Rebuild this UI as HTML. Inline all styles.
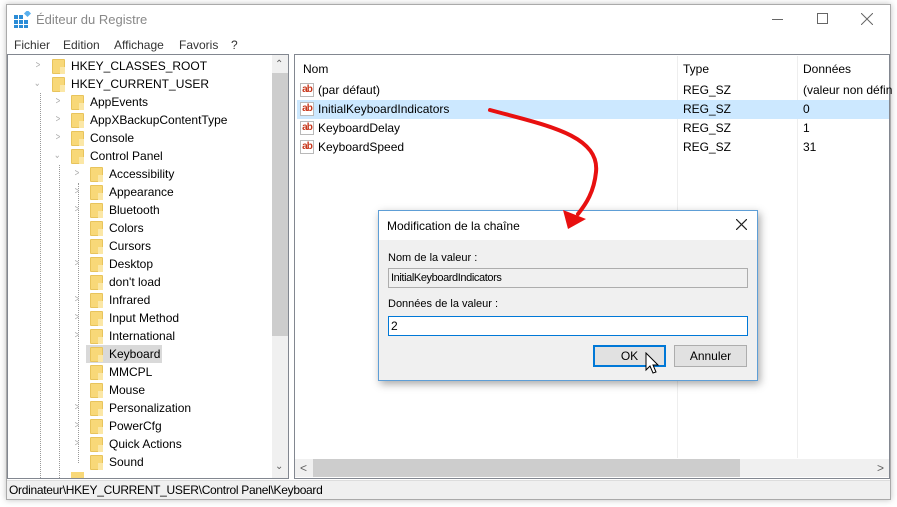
<!DOCTYPE html>
<html><head><meta charset="utf-8"><style>
*{margin:0;padding:0;box-sizing:border-box}
body{width:897px;height:507px;background:#fff;font-family:"Liberation Sans",sans-serif;font-size:12px;color:#000;position:relative;overflow:hidden}
.a{position:absolute}
.win{left:6px;top:4px;width:885px;height:496px;background:#fff;border:1px solid #aaa;box-shadow:0 0 6px rgba(0,0,0,.25)}
.t{position:absolute;white-space:nowrap;line-height:18px;height:18px}
.f{position:absolute;width:13px;height:15px;margin-top:2px;background:#f8d878;border:1px solid #e8c45c;border-radius:1px}
.f:after{content:"";position:absolute;right:-1px;bottom:-1px;width:5px;height:7px;background:#fbe7a6}
.ch{position:absolute;font-size:10px;color:#aaa;line-height:18px;transform:scaleX(.8)}
.ab{position:absolute;width:14px;height:14px;border:1px solid #b9b9b9;background:#fff;color:#c8381c;font-size:10px;font-weight:bold;line-height:12px;text-align:center;letter-spacing:-1px}
.btn{position:absolute;height:22px;background:#e1e1e1;border:1px solid #adadad;text-align:center;line-height:20px}
.tree{position:absolute;left:0;top:1px;width:290px;height:478px}
</style></head><body>
<div class="a win"></div>
<svg class="a" style="left:14px;top:11px" width="17" height="17" viewBox="0 0 17 17"><g fill="#2b8cd6"><rect x="0" y="4" width="4" height="4"/><rect x="5" y="4" width="4" height="4"/><rect x="0" y="9" width="4" height="4"/><rect x="5" y="9" width="4" height="4"/><rect x="10" y="9" width="4" height="4"/><rect x="0" y="14" width="4" height="3"/><rect x="5" y="14" width="4" height="3"/><rect x="10" y="14" width="4" height="3"/></g><rect x="11" y="0" width="5" height="5" fill="#5ab0ee" transform="rotate(45 13.5 2.5)"/></svg>
<div class="t" style="left:36px;top:11px;font-size:13px;color:#888">Éditeur du Registre</div>
<div class="a" style="left:772px;top:19px;width:11px;height:1px;background:#666"></div>
<div class="a" style="left:817px;top:13px;width:11px;height:11px;border:1px solid #666"></div>
<svg class="a" style="left:861px;top:13px" width="12" height="12"><path d="M0 0L12 12M12 0L0 12" stroke="#666" stroke-width="1"/></svg>
<div class="t" style="left:14px;top:36px;color:#333">Fichier</div>
<div class="t" style="left:63px;top:36px;color:#333">Edition</div>
<div class="t" style="left:114px;top:36px;color:#333">Affichage</div>
<div class="t" style="left:179px;top:36px;color:#333">Favoris</div>
<div class="t" style="left:231px;top:36px;color:#333">?</div>
<div class="a" style="left:7px;top:54px;width:282px;height:425px;border:1px solid #828790;background:#fff"></div>
<div class="a" style="left:272px;top:55px;width:16px;height:423px;background:#f0f0f0"></div>
<div class="a" style="left:272px;top:73px;width:16px;height:263px;background:#cdcdcd"></div>
<div class="t" style="left:275px;top:56px;font-size:10px;color:#606060">&#8963;</div>
<div class="t" style="left:275px;top:458px;font-size:10px;color:#606060">&#8964;</div>
<div class="tree">
<div class="a" style="left:40px;top:92px;height:385px;border-left:1px dotted #999"></div>
<div class="a" style="left:59px;top:164px;height:313px;border-left:1px dotted #999"></div>
<div class="a" style="left:78px;top:182px;height:280px;border-left:1px dotted #999"></div>
<div class="a" style="left:86px;top:344px;width:76px;height:18px;background:#d9d9d9"></div>
<div class="ch" style="left:35px;top:56px">&gt;</div><div class="f" style="left:52px;top:56px"></div><div class="t" style="left:71px;top:56px">HKEY_CLASSES_ROOT</div>
<div class="ch" style="left:33px;top:74px">&#8964;</div><div class="f" style="left:52px;top:74px"></div><div class="t" style="left:71px;top:74px">HKEY_CURRENT_USER</div>
<div class="ch" style="left:55px;top:92px">&gt;</div><div class="f" style="left:71px;top:92px"></div><div class="t" style="left:90px;top:92px">AppEvents</div>
<div class="ch" style="left:55px;top:110px">&gt;</div><div class="f" style="left:71px;top:110px"></div><div class="t" style="left:90px;top:110px">AppXBackupContentType</div>
<div class="ch" style="left:55px;top:128px">&gt;</div><div class="f" style="left:71px;top:128px"></div><div class="t" style="left:90px;top:128px">Console</div>
<div class="ch" style="left:53px;top:146px">&#8964;</div><div class="f" style="left:71px;top:146px"></div><div class="t" style="left:90px;top:146px">Control Panel</div>
<div class="ch" style="left:74px;top:164px">&gt;</div><div class="f" style="left:90px;top:164px"></div><div class="t" style="left:109px;top:164px">Accessibility</div>
<div class="ch" style="left:74px;top:182px">&gt;</div><div class="f" style="left:90px;top:182px"></div><div class="t" style="left:109px;top:182px">Appearance</div>
<div class="ch" style="left:74px;top:200px">&gt;</div><div class="f" style="left:90px;top:200px"></div><div class="t" style="left:109px;top:200px">Bluetooth</div>
<div class="f" style="left:90px;top:218px"></div><div class="t" style="left:109px;top:218px">Colors</div>
<div class="f" style="left:90px;top:236px"></div><div class="t" style="left:109px;top:236px">Cursors</div>
<div class="ch" style="left:74px;top:254px">&gt;</div><div class="f" style="left:90px;top:254px"></div><div class="t" style="left:109px;top:254px">Desktop</div>
<div class="f" style="left:90px;top:272px"></div><div class="t" style="left:109px;top:272px">don't load</div>
<div class="ch" style="left:74px;top:290px">&gt;</div><div class="f" style="left:90px;top:290px"></div><div class="t" style="left:109px;top:290px">Infrared</div>
<div class="ch" style="left:74px;top:308px">&gt;</div><div class="f" style="left:90px;top:308px"></div><div class="t" style="left:109px;top:308px">Input Method</div>
<div class="ch" style="left:74px;top:326px">&gt;</div><div class="f" style="left:90px;top:326px"></div><div class="t" style="left:109px;top:326px">International</div>
<div class="f" style="left:90px;top:344px"></div><div class="t" style="left:109px;top:344px">Keyboard</div>
<div class="f" style="left:90px;top:362px"></div><div class="t" style="left:109px;top:362px">MMCPL</div>
<div class="f" style="left:90px;top:380px"></div><div class="t" style="left:109px;top:380px">Mouse</div>
<div class="ch" style="left:74px;top:398px">&gt;</div><div class="f" style="left:90px;top:398px"></div><div class="t" style="left:109px;top:398px">Personalization</div>
<div class="ch" style="left:74px;top:416px">&gt;</div><div class="f" style="left:90px;top:416px"></div><div class="t" style="left:109px;top:416px">PowerCfg</div>
<div class="ch" style="left:74px;top:434px">&gt;</div><div class="f" style="left:90px;top:434px"></div><div class="t" style="left:109px;top:434px">Quick Actions</div>
<div class="f" style="left:90px;top:452px"></div><div class="t" style="left:109px;top:452px">Sound</div>
<div class="a" style="left:71px;top:471px;width:13px;height:6px;background:#f8d878"></div>
</div>
<div class="a" style="left:294px;top:54px;width:596px;height:425px;border:1px solid #828790;background:#fff"></div>
<div class="a" style="left:677px;top:56px;height:402px;border-left:1px solid #eee"></div>
<div class="a" style="left:797px;top:56px;height:402px;border-left:1px solid #eee"></div>
<div class="t" style="left:303px;top:60px">Nom</div>
<div class="t" style="left:683px;top:60px">Type</div>
<div class="t" style="left:803px;top:60px">Données</div>
<div class="a" style="left:297px;top:100px;width:592px;height:19px;background:#cce8ff"></div>
<div class="ab" style="left:300px;top:83px">ab</div><div class="t" style="left:318px;top:81px">(par défaut)</div><div class="t" style="left:683px;top:81px">REG_SZ</div><div class="t" style="left:803px;top:81px">(valeur non défin</div>
<div class="ab" style="left:300px;top:102px">ab</div><div class="t" style="left:318px;top:100px">InitialKeyboardIndicators</div><div class="t" style="left:683px;top:100px">REG_SZ</div><div class="t" style="left:803px;top:100px">0</div>
<div class="ab" style="left:300px;top:121px">ab</div><div class="t" style="left:318px;top:119px">KeyboardDelay</div><div class="t" style="left:683px;top:119px">REG_SZ</div><div class="t" style="left:803px;top:119px">1</div>
<div class="ab" style="left:300px;top:140px">ab</div><div class="t" style="left:318px;top:138px">KeyboardSpeed</div><div class="t" style="left:683px;top:138px">REG_SZ</div><div class="t" style="left:803px;top:138px">31</div>
<div class="a" style="left:295px;top:459px;width:594px;height:18px;background:#f0f0f0"></div>
<div class="a" style="left:313px;top:459px;width:427px;height:18px;background:#cdcdcd"></div>
<div class="t" style="left:300px;top:459px;color:#606060">&lt;</div>
<div class="t" style="left:877px;top:459px;color:#606060">&gt;</div>
<div class="a" style="left:7px;top:480px;width:883px;height:19px;background:#f0f0f0;border-top:1px solid #ddd"></div>
<div class="t" style="left:9px;top:481px;letter-spacing:-0.3px">Ordinateur\HKEY_CURRENT_USER\Control Panel\Keyboard</div>
<div class="a" style="left:378px;top:210px;width:380px;height:171px;background:#f0f0f0;border:1px solid #5e9ed6;box-shadow:2px 3px 8px rgba(0,0,0,.35)"></div>
<div class="a" style="left:379px;top:211px;width:378px;height:29px;background:#fff"></div>
<div class="t" style="left:387px;top:217px">Modification de la chaîne</div>
<svg class="a" style="left:736px;top:219px" width="11" height="11"><path d="M0 0L11 11M11 0L0 11" stroke="#222" stroke-width="1.2"/></svg>
<div class="t" style="left:388px;top:249px;font-size:11px">Nom de la valeur :</div>
<div class="a" style="left:388px;top:268px;width:360px;height:20px;background:#f0f0f0;border:1px solid #adadad"></div>
<div class="t" style="left:391px;top:269px;font-size:11px;letter-spacing:-0.4px">InitialKeyboardIndicators</div>
<div class="t" style="left:388px;top:295px;font-size:11px">Données de la valeur :</div>
<div class="a" style="left:388px;top:316px;width:360px;height:20px;background:#fff;border:1px solid #0078d7"></div>
<div class="t" style="left:391px;top:317px">2</div>
<div class="btn" style="left:593px;top:345px;width:73px;border:2px solid #0078d7;line-height:18px">OK</div>
<div class="btn" style="left:674px;top:345px;width:73px">Annuler</div>
<svg class="a" style="left:645px;top:352px" width="16" height="24" viewBox="0 0 16 24"><path d="M1 1L1 18L5 14L8 21L11 20L8 13L13 13Z" fill="#fff" stroke="#000" stroke-width="1"/></svg>
<svg class="a" style="left:0;top:0" width="897" height="507"><path d="M490 110C545 125 600 135 596 172C594 192 586 204 578 214" fill="none" stroke="#e81010" stroke-width="4" stroke-linecap="round"/><polygon points="568,229 563,210 586,219" fill="#e81010"/></svg>
</body></html>
